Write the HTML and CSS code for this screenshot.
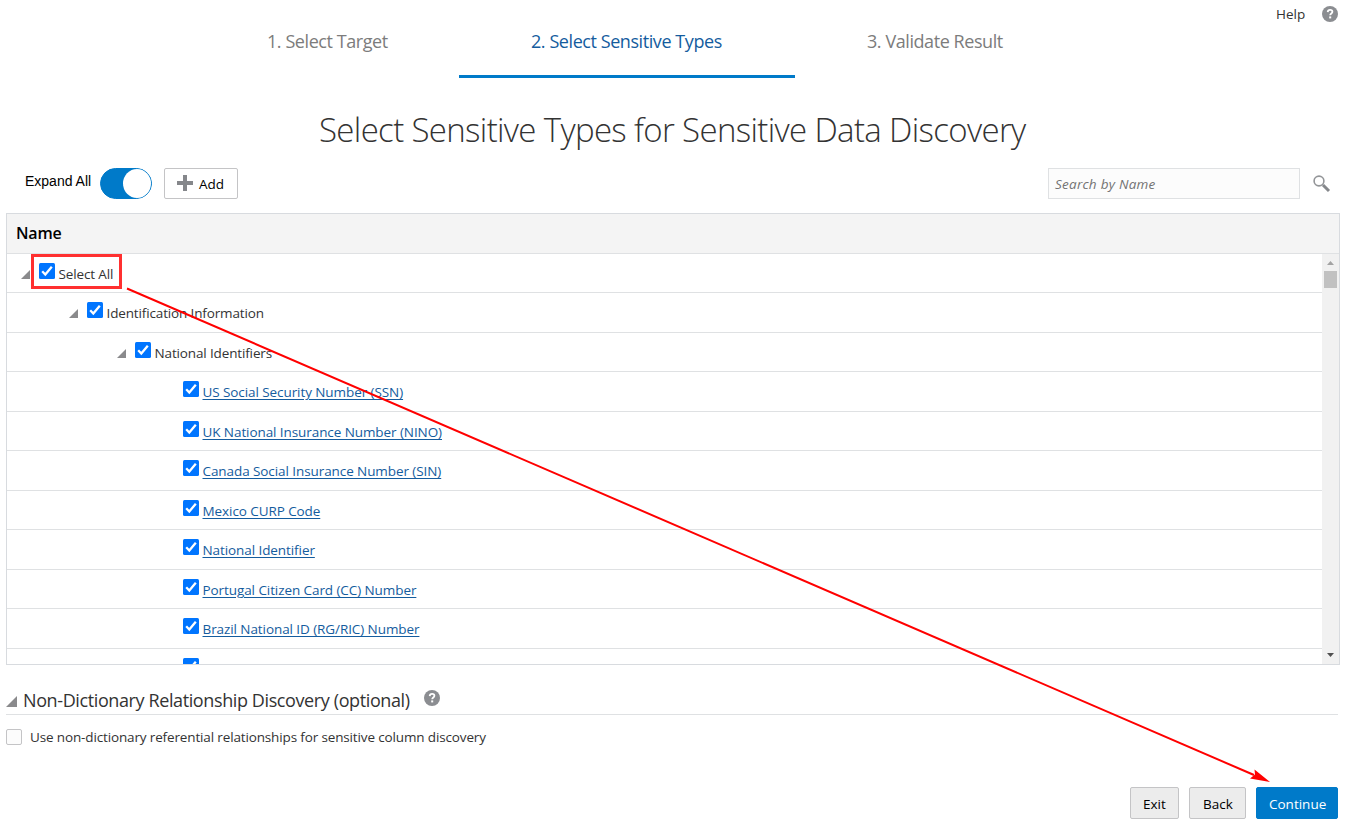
FILE: index.html
```html
<!DOCTYPE html>
<html lang="en">
<head>
<meta charset="utf-8">
<title>Sensitive Data Discovery</title>
<link rel="stylesheet" href="styles.css">
</head>
<body>
<svg class="defs" width="0" height="0">
  <symbol id="tick" viewBox="0 0 16 16"><rect width="16" height="16" rx="1.5" fill="#0075ff"/><path d="M3.2 8.3 6.3 11.5 12.8 3.7" fill="none" stroke="#fff" stroke-width="2.3"/></symbol>
  <symbol id="tri" viewBox="0 0 10 10"><path d="M10 0V10H0Z" fill="#8a8a8c"/></symbol>
  <symbol id="help" viewBox="0 0 16 16"><circle cx="8" cy="8" r="8" fill="#8b8d91"/><path d="M5.7 6.1C5.8 4.6 6.7 3.9 8.1 3.9c1.4 0 2.3.8 2.3 1.9 0 1.6-2.2 1.7-2.2 3.4" fill="none" stroke="#fff" stroke-width="1.8"/><rect x="7.2" y="10.4" width="2" height="2" fill="#fff"/></symbol>
</svg>
<div class="page">
  <div class="helpbar"><span class="help-text">Help</span><svg class="help-icon"><use href="#help"/></svg></div>
  <nav class="train">
    <span class="step s1"><span>1. Select Target</span></span>
    <span class="step s2 active"><span>2. Select Sensitive Types</span></span>
    <span class="step s3"><span>3. Validate Result</span></span>
  </nav>
  <h1 class="title"><span>Select Sensitive Types for Sensitive Data Discovery</span></h1>
  <div class="toolbar">
    <span class="expand">Expand All</span>
    <span class="toggle"><span class="knob"></span></span>
    <button class="btn add"><svg class="plus" viewBox="0 0 16 16"><path d="M6 0h4v6h6v4h-6v6H6v-6H0V6h6z" fill="#85878b"/></svg><span>Add</span></button>
    <div class="search"><span>Search by Name</span></div>
    <svg class="glass" viewBox="0 0 18 18"><circle cx="6" cy="6" r="4.9" fill="none" stroke="#939598" stroke-width="1.6"/><path d="M10 10 16 16" stroke="#85878b" stroke-width="3"/></svg>
  </div>
  <section class="table">
    <div class="thead"><span>Name</span></div>
    <div class="tbody">
      <div class="rows">
        <div class="row l0"><svg class="tri"><use href="#tri"/></svg><svg class="check"><use href="#tick"/></svg><span class="label">Select All</span></div>
        <div class="row l1"><svg class="tri"><use href="#tri"/></svg><svg class="check"><use href="#tick"/></svg><span class="label">Identification Information</span></div>
        <div class="row l2"><svg class="tri"><use href="#tri"/></svg><svg class="check"><use href="#tick"/></svg><span class="label">National Identifiers</span></div>
        <div class="row l3"><svg class="check"><use href="#tick"/></svg><a class="label">US Social Security Number (SSN)</a></div>
        <div class="row l3"><svg class="check"><use href="#tick"/></svg><a class="label">UK National Insurance Number (NINO)</a></div>
        <div class="row l3"><svg class="check"><use href="#tick"/></svg><a class="label">Canada Social Insurance Number (SIN)</a></div>
        <div class="row l3"><svg class="check"><use href="#tick"/></svg><a class="label">Mexico CURP Code</a></div>
        <div class="row l3"><svg class="check"><use href="#tick"/></svg><a class="label">National Identifier</a></div>
        <div class="row l3"><svg class="check"><use href="#tick"/></svg><a class="label">Portugal Citizen Card (CC) Number</a></div>
        <div class="row l3"><svg class="check"><use href="#tick"/></svg><a class="label">Brazil National ID (RG/RIC) Number</a></div>
        <div class="row l3"><svg class="check"><use href="#tick"/></svg></div>
      </div>
      <div class="scroll">
        <svg class="arrow" viewBox="0 0 17 17"><path d="M5 11 8.5 7 12 11Z" fill="#a3a3a3"/></svg>
        <div class="thumb"></div>
        <svg class="arrow down" viewBox="0 0 17 17"><path d="M5 6 8.5 10 12 6Z" fill="#505050"/></svg>
      </div>
    </div>
  </section>
  <div class="subhead"><svg class="sub-tri"><use href="#tri"/></svg><h2>Non-Dictionary Relationship Discovery (optional)</h2><svg class="help-icon"><use href="#help"/></svg></div>
  <label class="option"><span class="box"></span><span class="option-text">Use non-dictionary referential relationships for sensitive column discovery</span></label>
  <footer class="actions">
    <button class="btn exit">Exit</button>
    <button class="btn back">Back</button>
    <button class="btn primary">Continue</button>
  </footer>
</div>
<svg class="annotation" viewBox="0 0 1347 824">
  <rect x="32.5" y="255.500" width="88" height="32" fill="none" stroke="#ff3030" stroke-width="3"/>
  <path d="M127 288.500 1254 775" stroke="#f00" stroke-width="2"/>
  <path d="M1270 782 1254.500 769.500 1255 774.500 1250 778.500Z" fill="#f00"/>
</svg>
</body>
</html>
```
FILE: styles.css
```css
* { box-sizing: border-box; }
body { margin: 0; background: #fff; color: #333; font: 13.5px/20px "Open Sans", "Noto Sans", sans-serif; overflow: hidden; }
svg { display: block; flex: none; }
.defs { position: absolute; }
.page { width: 1347px; height: 824px; white-space: nowrap; }
.helpbar { display: flex; justify-content: flex-end; height: 22px; padding: 6px 9px 0 0; line-height: 16px; }
.help-text { width: 29px; margin-right: 17px; }
.help-icon { width: 16px; height: 16px; }
.train { display: flex; padding-left: 195px; height: 56px; font-size: 18px; line-height: 38px; letter-spacing: -0.43px; color: #7c7c7c; }
.step { padding: 0 72px; }
.s1 { width: 264px; }
.s2 { width: 336px; }
.s3 { width: 280px; }
.active { color: #145c9e; border-bottom: 3px solid #007ac9; }
.title { margin: 0; height: 90px; padding: 27px 0 0 319px; font-size: 33px; line-height: 50px; letter-spacing: -0.65px; font-weight: 300; }
.toolbar { display: flex; height: 45px; padding-left: 25px; }
.expand { width: 75px; padding-top: 3px; color: #000; font: 14px/20px "Liberation Sans", Arial, sans-serif; }
.toggle { width: 52px; height: 31px; border: 1px solid #007ac9; border-radius: 16px; background: #007ac9; display: flex; justify-content: flex-end; }
.knob { width: 28px; height: 29px; border-radius: 50%; background: #fff; }
.btn { display: flex; align-items: center; height: 32px; margin: 0; padding: 2px 12px 0 12px; border: 1px solid #c4c4c6; border-radius: 2px; background: #ececec; color: #000; font: 13.5px/20px "Open Sans", "Noto Sans", sans-serif; }
.add { width: 74px; height: 31px; margin-left: 12px; padding: 0 12px; background: #fff; }
.plus { width: 16px; height: 16px; margin: -1px 6px 0 0; }
.search { width: 252px; height: 31px; margin-left: 810px; padding: 5px 0 0 6px; border: 1px solid #dfe1e3; background: #fcfcfc; color: #737373; font-style: italic; line-height: 20px; letter-spacing: 0.25px; }
.glass { width: 18px; height: 18px; margin: 7px 0 0 13px; }
.table { width: 1334px; height: 452px; margin-left: 6px; border: 1px solid #d8dbdf; }
.thead { height: 40px; padding-left: 9px; background: #f4f4f4; border-bottom: 1px solid #dfe1e3; color: #000; font-size: 16px; line-height: 38px; letter-spacing: -0.2px; font-weight: 600; }
.tbody { display: flex; height: 410px; }
.rows { width: 1315px; height: 410px; overflow: hidden; }
.row { display: flex; height: 39px; border-bottom: 1px solid #dfe1e3; padding-top: 9px; }
.row:nth-child(even) { height: 40px; }
.l0 { padding-left: 14px; }
.l1 { padding-left: 62px; }
.l2 { padding-left: 110px; }
.l3 { padding-left: 176px; }
.tri { width: 9px; height: 9px; margin: 7px 9px 0 0; }
.check { width: 16px; height: 16px; margin-right: 3.5px; }
.label { line-height: 20px; padding-top: 1px; letter-spacing: -0.14px; }
a.label { color: #145c9e; letter-spacing: -0.08px; text-decoration: underline; text-underline-offset: 2px; }
.scroll { display: flex; flex-direction: column; width: 17px; height: 410px; background: #f1f1f1; }
.arrow { width: 17px; height: 17px; }
.thumb { width: 13px; height: 17px; margin-left: 2px; background: #c1c1c1; }
.down { margin-top: auto; }
.subhead { display: flex; width: 1332px; height: 50px; margin-left: 6px; padding-top: 25px; border-bottom: 1px solid #dfe1e3; }
.sub-tri { width: 11px; height: 11px; margin: 6px 6px 0 0; }
.subhead h2 { width: 387px; margin: 0 14px 0 0; font-size: 18px; line-height: 20px; letter-spacing: -0.39px; font-weight: 400; }
.option { display: flex; padding: 14px 0 0 6px; height: 72px; line-height: 16px; letter-spacing: -0.14px; }
.box { width: 16px; height: 16px; margin-right: 8px; border: 1px solid #c4c4c6; border-radius: 2px; background: #fcfcfc; }
.actions { display: flex; padding-left: 1130px; gap: 10px; }
.exit { width: 49px; }
.back { width: 57px; padding-left: 13px; }
.primary { width: 82px; border-color: #007ac9; background: #007ac9; color: #fff; }
.annotation { position: absolute; left: 0; top: 0; width: 1347px; height: 824px; pointer-events: none; }
```
